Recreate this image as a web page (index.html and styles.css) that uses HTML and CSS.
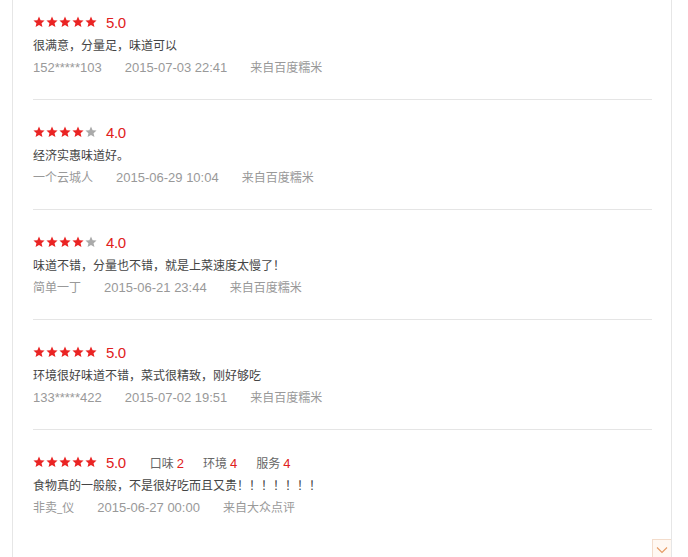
FILE: index.html
```html
<!DOCTYPE html>
<html lang="zh">
<head>
<meta charset="utf-8">
<link rel="stylesheet" href="styles.css">
</head>
<body>
<svg width="0" height="0" class="defs">
  <defs>
    <symbol id="star" viewBox="0 0 24 24">
      <path d="M12 1.2l3.2 7.3 7.9.7-6 5.2 1.8 7.8L12 18.1l-6.9 4.1 1.8-7.8-6-5.2 7.9-.7z"/>
    </symbol>
  </defs>
</svg>
<div class="panel">
  <div class="review">
    <div class="rating">
      <span class="stars"><svg class="s on"><use href="#star"/></svg><svg class="s on"><use href="#star"/></svg><svg class="s on"><use href="#star"/></svg><svg class="s on"><use href="#star"/></svg><svg class="s on"><use href="#star"/></svg></span>
      <span class="score">5.0</span>
    </div>
    <div class="text">很满意，分量足，味道可以</div>
    <div class="meta"><span class="num">152*****103</span><span class="num">2015-07-03 22:41</span><span>来自百度糯米</span></div>
  </div>
  <div class="review">
    <div class="rating">
      <span class="stars"><svg class="s on"><use href="#star"/></svg><svg class="s on"><use href="#star"/></svg><svg class="s on"><use href="#star"/></svg><svg class="s on"><use href="#star"/></svg><svg class="s off"><use href="#star"/></svg></span>
      <span class="score">4.0</span>
    </div>
    <div class="text">经济实惠味道好。</div>
    <div class="meta"><span>一个云城人</span><span class="num">2015-06-29 10:04</span><span>来自百度糯米</span></div>
  </div>
  <div class="review">
    <div class="rating">
      <span class="stars"><svg class="s on"><use href="#star"/></svg><svg class="s on"><use href="#star"/></svg><svg class="s on"><use href="#star"/></svg><svg class="s on"><use href="#star"/></svg><svg class="s off"><use href="#star"/></svg></span>
      <span class="score">4.0</span>
    </div>
    <div class="text">味道不错，分量也不错，就是上菜速度太慢了！</div>
    <div class="meta"><span>简单一丁</span><span class="num">2015-06-21 23:44</span><span>来自百度糯米</span></div>
  </div>
  <div class="review">
    <div class="rating">
      <span class="stars"><svg class="s on"><use href="#star"/></svg><svg class="s on"><use href="#star"/></svg><svg class="s on"><use href="#star"/></svg><svg class="s on"><use href="#star"/></svg><svg class="s on"><use href="#star"/></svg></span>
      <span class="score">5.0</span>
    </div>
    <div class="text">环境很好味道不错，菜式很精致，刚好够吃</div>
    <div class="meta"><span class="num">133*****422</span><span class="num">2015-07-02 19:51</span><span>来自百度糯米</span></div>
  </div>
  <div class="review last">
    <div class="rating">
      <span class="stars"><svg class="s on"><use href="#star"/></svg><svg class="s on"><use href="#star"/></svg><svg class="s on"><use href="#star"/></svg><svg class="s on"><use href="#star"/></svg><svg class="s on"><use href="#star"/></svg></span>
      <span class="score">5.0</span>
      <span class="sub">口味<em>2</em></span>
      <span class="sub">环境<em>4</em></span>
      <span class="sub">服务<em>4</em></span>
    </div>
    <div class="text">食物真的一般般，不是很好吃而且又贵！！！！！！！</div>
    <div class="meta"><span>非卖_仪</span><span class="num">2015-06-27 00:00</span><span>来自大众点评</span></div>
  </div>
  <div class="more">
    <svg width="12" height="8" viewBox="0 0 12 8"><path d="M1 1.5l5 5 5-5" fill="none" stroke="#e59a63" stroke-width="1.1"/></svg>
  </div>
</div>
</body>
</html>
```

FILE: styles.css
```css
html, body {
  margin: 0;
  padding: 0;
  background: #fff;
}
body {
  font-family: "Open Sans", "Noto Sans CJK SC", sans-serif;
  font-size: 12px;
  color: #333;
  overflow: hidden;
  height: 557px;
}
.defs {
  position: absolute;
}
.panel {
  margin-left: 12px;
  width: 619px;
  height: 600px;
  border-left: 1px solid #e6e6e6;
  border-right: 1px solid #e6e6e6;
  padding: 0 19px 0 20px;
  position: relative;
}
.review {
  padding: 21px 0 20px;
  border-bottom: 1px solid #e5e5e5;
}
.review:first-child {
  padding-top: 11px;
}
.review.last {
  border-bottom: none;
}
.rating {
  display: flex;
  align-items: center;
  height: 22px;
}
.stars {
  display: flex;
  gap: 1px;
}
.s {
  width: 12px;
  height: 12px;
}
.s.on { fill: #ea2424; }
.s.off { fill: #aaaaaa; }
.score {
  margin-left: 9px;
  font-family: "Liberation Sans", sans-serif;
  font-size: 15px;
  color: #e02020;
  letter-spacing: -0.4px;
}
.sub {
  margin-left: 19px;
  font-size: 12px;
  color: #666;
  font-family: "Noto Sans CJK SC", sans-serif;
}
.score + .sub {
  margin-left: 24px;
}
.sub em {
  margin-left: 3px;
  font-style: normal;
  font-size: 13px;
  color: #e02020;
  font-family: "Liberation Sans", sans-serif;
}
.text {
  margin-top: 2px;
  line-height: 22px;
  height: 22px;
  color: #444;
}
.meta {
  display: flex;
  gap: 23px;
  line-height: 22px;
  height: 22px;
  color: #999;
}
.meta .num {
  font-family: "Liberation Sans", sans-serif;
  font-size: 13px;
}
.more {
  position: absolute;
  right: 0;
  top: 539px;
  width: 18px;
  height: 20px;
  border: 1px solid #f3dccb;
  border-right: none;
  background: #fff8f2;
  display: flex;
  justify-content: center;
  align-items: center;
}
```
